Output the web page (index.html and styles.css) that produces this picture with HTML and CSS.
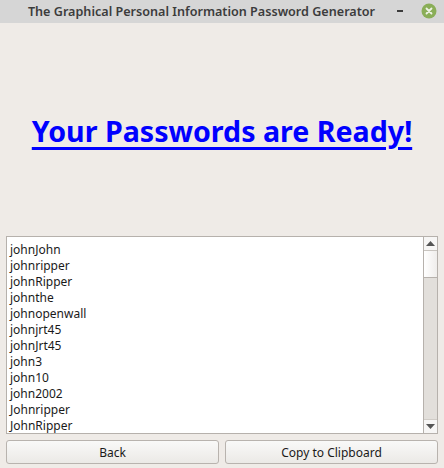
FILE: index.html
```html
<!DOCTYPE html>
<html>
<head>
<meta charset="utf-8">
<link rel="stylesheet" href="styles.css">
</head>
<body>
<div class="window">
  <div class="titlebar">
    <span class="title">The Graphical Personal Information Password Generator</span>
    <span class="minimize"></span>
    <span class="close">
      <svg width="16" height="16" viewBox="0 0 16 16"><circle cx="8" cy="8" r="7.5" fill="#8aae58"/><path d="M5.5 5.5 L10.5 10.5 M10.5 5.5 L5.5 10.5" stroke="#eef3e6" stroke-width="1.8" stroke-linecap="round"/></svg>
    </span>
  </div>
  <div class="content">
    <div class="heading-area">
      <a class="heading" href="#">Your Passwords are Ready!</a>
    </div>
    <div class="listbox">
      <ul class="items">
        <li>johnJohn</li>
        <li>johnripper</li>
        <li>johnRipper</li>
        <li>johnthe</li>
        <li>johnopenwall</li>
        <li>johnjrt45</li>
        <li>johnJrt45</li>
        <li>john3</li>
        <li>john10</li>
        <li>john2002</li>
        <li>Johnripper</li>
        <li>JohnRipper</li>
      </ul>
      <div class="scrollbar">
        <div class="sb-btn"><svg width="9" height="5" viewBox="0 0 9 5"><path d="M4.5 0 L9 5 L0 5 Z" fill="#555"/></svg></div>
        <div class="sb-thumb"></div>
        <div class="sb-trough"></div>
        <div class="sb-btn down"><svg width="9" height="5" viewBox="0 0 9 5"><path d="M0 0 L9 0 L4.5 5 Z" fill="#555"/></svg></div>
      </div>
    </div>
    <div class="buttons">
      <button class="btn">Back</button>
      <button class="btn">Copy to Clipboard</button>
    </div>
  </div>
</div>
</body>
</html>
```

FILE: styles.css
```css
* { box-sizing: border-box; }
html, body { margin: 0; padding: 0; }
body {
  width: 444px;
  height: 468px;
  overflow: hidden;
  background: #efebe7;
  font-family: "Noto Sans", "DejaVu Sans", sans-serif;
}
.window {
  display: flex;
  flex-direction: column;
  height: 468px;
}
.titlebar {
  height: 23px;
  background: #d6d6d6;
  display: flex;
  align-items: center;
  position: relative;
}
.title {
  position: absolute;
  left: 27px;
  width: 349px;
  text-align: center;
  font-size: 12.6px;
  font-weight: 600;
  color: #3c3c3c;
  white-space: nowrap;
}
.minimize {
  position: absolute;
  left: 397px;
  top: 10px;
  width: 6px;
  height: 2px;
  background: #3c3c3c;
}
.close {
  position: absolute;
  left: 421px;
  top: 3px;
  width: 16px;
  height: 16px;
  display: block;
}
.close svg { display: block; }
.content {
  flex: 1;
  display: flex;
  flex-direction: column;
  padding: 0 6px 4px 6px;
}
.heading-area {
  height: 213px;
  display: flex;
  align-items: center;
  justify-content: center;
  padding-top: 2px;
}
.heading {
  color: #0000ff;
  font-weight: 700;
  font-size: 28.6px;
  text-decoration: underline;
  text-decoration-thickness: 3px;
  text-underline-offset: 5px;
}
.listbox {
  height: 198px;
  border: 1px solid #b6b1ac;
  background: #fff;
  display: flex;
}
.items {
  list-style: none;
  margin: 0;
  padding: 5px 0 0 3px;
  flex: 1;
  overflow: hidden;
}
.items li {
  font-size: 12px;
  line-height: 16px;
  color: #1a1a1a;
  white-space: nowrap;
}
.scrollbar {
  width: 14px;
  border-left: 1px solid #b6b1ac;
  display: flex;
  flex-direction: column;
  background: #e2dfdb;
}
.sb-btn {
  height: 14px;
  background: #f7f6f5;
  display: flex;
  align-items: center;
  justify-content: center;
  border-bottom: 1px solid #c8c4bf;
}
.sb-btn.down {
  border-bottom: none;
  border-top: 1px solid #d0ccc7;
}
.sb-thumb {
  height: 27px;
  background: linear-gradient(to right, #ffffff, #efedeb);
  border-bottom: 1px solid #b6b1ac;
}
.sb-trough { flex: 1; }
.buttons {
  display: flex;
  gap: 6px;
  margin-top: 6px;
}
.btn {
  flex: 1;
  height: 24px;
  border: 1px solid #b8b3ae;
  border-radius: 3px;
  background: linear-gradient(to bottom, #f9f9f8, #ebe9e6);
  font-family: "Noto Sans", "DejaVu Sans", sans-serif;
  font-size: 12px;
  color: #1a1a1a;
  padding: 0;
}
```
